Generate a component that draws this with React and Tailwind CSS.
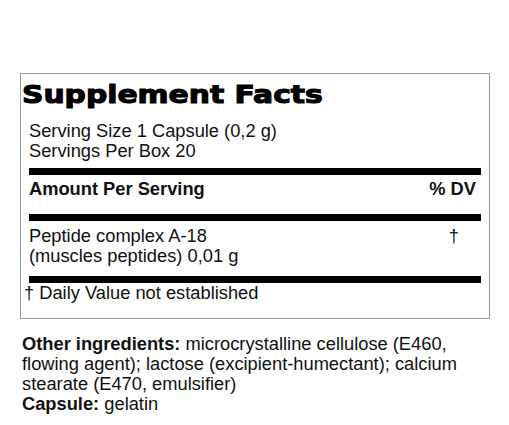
export default function App() {
  return (
    <div className="min-h-[425px] w-[509px] bg-white pl-[20px] pt-[73px] text-[#111] font-['Liberation_Sans',Arial,sans-serif]">
      <div className="w-[470px] h-[246px] border border-[#9a9a9a]">
        <div className="mt-[6px] pl-[1px] h-[30px] leading-[30px]">
          <h1 className="inline-block origin-left scale-x-[1.19] text-[25px] font-bold text-black font-['DejaVu_Sans',sans-serif] [-webkit-text-stroke:1.1px_black]">
            Supplement Facts
          </h1>
        </div>

        <div className="px-[8px]">
          <div className="mt-[11px] text-[18.3px] leading-[20px]">
            <p>Serving Size 1 Capsule (0,2 g)</p>
            <p>Servings Per Box 20</p>
          </div>

          <div className="mt-[7px] h-[7px] bg-black" />

          <div className="mt-[4px] flex justify-between pr-[5px] text-[18.3px] font-bold leading-[20px]">
            <span>Amount Per Serving</span>
            <span>% DV</span>
          </div>

          <div className="mt-[15px] h-[7px] bg-black" />

          <div className="mt-[5px] flex justify-between pr-[22px] text-[18.3px] leading-[20px]">
            <p>
              Peptide complex A-18
              <br />
              (muscles peptides) 0,01 g
            </p>
            <span>†</span>
          </div>

          <div className="mt-[10px] h-[7px] bg-black" />
        </div>

        <p className="pl-[3px] text-[18.3px] leading-[20px]">† Daily Value not established</p>
      </div>

      <p className="mt-[15px] w-[468px] pl-[2px] text-[18.3px] leading-[20px]">
        <b>Other ingredients:</b> microcrystalline cellulose (E460, flowing agent); lactose (excipient-humectant); calcium stearate (E470, emulsifier)
        <br />
        <b>Capsule:</b> gelatin
      </p>
    </div>
  );
}
